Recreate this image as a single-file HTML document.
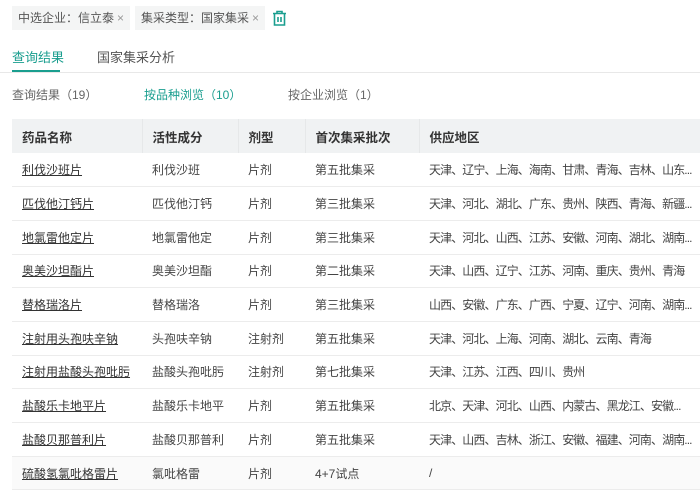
<!DOCTYPE html>
<html><head><meta charset="utf-8"><style>
*{margin:0;padding:0;box-sizing:border-box}
body{width:700px;height:489px;overflow:hidden;background:#fff;font-family:"Liberation Sans","Noto Sans CJK SC",sans-serif;font-size:12px;color:#333;position:relative}
.tag{position:absolute;top:6px;height:24px;line-height:24px;background:#f4f5f5;color:#555;padding:0 6px;font-size:12px}
.tag span{color:#999;margin-left:3px}
.tab{position:absolute;top:47px;font-size:13px;color:#555}
.sub{position:absolute;top:86px;font-size:12px;color:#666}
table{position:absolute;left:12px;top:119px;width:730px;border-collapse:collapse;table-layout:fixed}
th{background:#f0f2f3;height:34px;text-align:left;font-weight:bold;color:#333;padding-left:10px;font-size:12.5px;border-right:1px solid #e6e8e9}
td{height:33.7px;padding-left:10px;border-bottom:1px solid #ececec;color:#444;white-space:nowrap;overflow:hidden}
td:nth-child(5){letter-spacing:-0.9px}
td.n{text-decoration:underline;color:#333}
</style></head><body>
<div class="tag" style="left:12px">中选企业：信立泰<span>×</span></div>
<div class="tag" style="left:135px">集采类型：国家集采<span>×</span></div>
<svg style="position:absolute;left:272px;top:10px" width="15" height="17" viewBox="0 0 15 17" fill="none" stroke="#1a9e8f" stroke-width="1.6"><path d="M1 3.5h13M5 3.5V1.5h5v2M2.5 3.5v11.5h10V3.5M6 7v5M9 7v5"/></svg>
<div class="tab" style="left:12px;color:#1a9e8f">查询结果</div>
<div style="position:absolute;left:12px;top:70px;width:48px;height:2px;background:#1a9e8f"></div>
<div class="tab" style="left:97px">国家集采分析</div>
<div style="position:absolute;left:0;top:72px;width:700px;height:1px;background:#e8e8e8"></div>
<div class="sub" style="left:12px">查询结果（19）</div>
<div class="sub" style="left:144px;color:#1a9e8f">按品种浏览（10）</div>
<div class="sub" style="left:288px">按企业浏览（1）</div>
<table>
<colgroup><col style="width:130px"><col style="width:96px"><col style="width:67px"><col style="width:114px"><col></colgroup>
<tr><th>药品名称</th><th>活性成分</th><th>剂型</th><th>首次集采批次</th><th style="border-right:none">供应地区</th></tr>
<tr><td class="n">利伐沙班片</td><td>利伐沙班</td><td>片剂</td><td>第五批集采</td><td>天津、辽宁、上海、海南、甘肃、青海、吉林、山东...</td></tr>
<tr><td class="n">匹伐他汀钙片</td><td>匹伐他汀钙</td><td>片剂</td><td>第三批集采</td><td>天津、河北、湖北、广东、贵州、陕西、青海、新疆...</td></tr>
<tr><td class="n">地氯雷他定片</td><td>地氯雷他定</td><td>片剂</td><td>第三批集采</td><td>天津、河北、山西、江苏、安徽、河南、湖北、湖南...</td></tr>
<tr><td class="n">奥美沙坦酯片</td><td>奥美沙坦酯</td><td>片剂</td><td>第二批集采</td><td>天津、山西、辽宁、江苏、河南、重庆、贵州、青海</td></tr>
<tr><td class="n">替格瑞洛片</td><td>替格瑞洛</td><td>片剂</td><td>第三批集采</td><td>山西、安徽、广东、广西、宁夏、辽宁、河南、湖南...</td></tr>
<tr><td class="n">注射用头孢呋辛钠</td><td>头孢呋辛钠</td><td>注射剂</td><td>第五批集采</td><td>天津、河北、上海、河南、湖北、云南、青海</td></tr>
<tr><td class="n">注射用盐酸头孢吡肟</td><td>盐酸头孢吡肟</td><td>注射剂</td><td>第七批集采</td><td>天津、江苏、江西、四川、贵州</td></tr>
<tr><td class="n">盐酸乐卡地平片</td><td>盐酸乐卡地平</td><td>片剂</td><td>第五批集采</td><td>北京、天津、河北、山西、内蒙古、黑龙江、安徽...</td></tr>
<tr><td class="n">盐酸贝那普利片</td><td>盐酸贝那普利</td><td>片剂</td><td>第五批集采</td><td>天津、山西、吉林、浙江、安徽、福建、河南、湖南...</td></tr>
<tr style="background:#fafafa"><td class="n">硫酸氢氯吡格雷片</td><td>氯吡格雷</td><td>片剂</td><td>4+7试点</td><td>/</td></tr>
</table>
</body></html>
